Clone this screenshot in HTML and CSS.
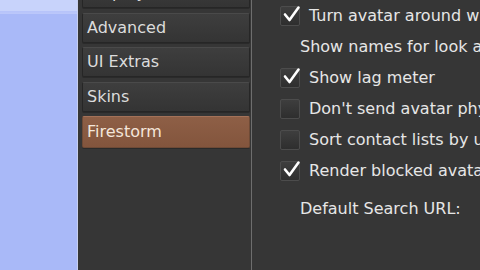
FILE: index.html
```html
<!DOCTYPE html>
<html>
<head>
<meta charset="utf-8">
<link rel="stylesheet" href="styles.css">
</head>
<body>
<div class="screen">
  <div class="desktop">
    <div class="desk-top"></div>
    <div class="desk-band"></div>
  </div>
  <div class="panel">
    <div class="tabs">
      <div class="tab">Display</div>
      <div class="tab">Advanced</div>
      <div class="tab">UI Extras</div>
      <div class="tab">Skins</div>
      <div class="tab selected">Firestorm</div>
    </div>
    <div class="sep"></div>
    <div class="content">
      <div class="row"><span class="cb checked"><svg viewBox="0 0 20 20"><path d="M4 9.5 L8.5 15 L17.5 2.5"/></svg></span><span class="lbl">Turn avatar around when walking backwards</span></div>
      <div class="row plain"><span class="lbl">Show names for look at targets</span></div>
      <div class="row"><span class="cb checked"><svg viewBox="0 0 20 20"><path d="M4 9.5 L8.5 15 L17.5 2.5"/></svg></span><span class="lbl">Show lag meter</span></div>
      <div class="row"><span class="cb"></span><span class="lbl">Don't send avatar physics</span></div>
      <div class="row"><span class="cb"></span><span class="lbl">Sort contact lists by username</span></div>
      <div class="row"><span class="cb checked"><svg viewBox="0 0 20 20"><path d="M4 9.5 L8.5 15 L17.5 2.5"/></svg></span><span class="lbl">Render blocked avatars</span></div>
      <div class="row plain url"><span class="lbl">Default Search URL:</span></div>
    </div>
  </div>
</div>
</body>
</html>
```
FILE: styles.css
```css
html, body {
  margin: 0;
  padding: 0;
  width: 480px;
  height: 270px;
  overflow: hidden;
  background: #353535;
}
.screen {
  display: flex;
  width: 480px;
  height: 270px;
  font-family: "DejaVu Sans", sans-serif;
  font-size: 16px;
  color: #e4e4e4;
}
.desktop {
  width: 77px;
  flex: none;
  background: #a9b9f8;
  border-right: 1px solid #c7cfee;
  display: flex;
  flex-direction: column;
}
.desk-top {
  height: 11px;
  background: #c8d3fb;
}
.desk-band {
  height: 3px;
  background: linear-gradient(#b6c3fa, #bcc8fa);
}
.panel {
  flex: 1;
  display: flex;
  background: #363636;
}
.tabs {
  width: 168px;
  flex: none;
  padding-left: 4px;
  margin-top: -22px;
  display: flex;
  flex-direction: column;
  gap: 4.5px;
}
.tab {
  height: 28px;
  line-height: 28px;
  padding-left: 4px;
  border: 1px solid #262626;
  border-top-color: #4a4a4a;
  border-radius: 2px;
  background: linear-gradient(#3e3e3e, #343434);
  color: #dcdcdc;
  box-shadow: 0 1px 0 #2a2a2a;
}
.tab.selected {
  height: 30px;
  line-height: 30px;
  background: linear-gradient(#8e5f46, #83553d);
  border-color: #6e4a36;
  border-top-color: #a47259;
  color: #f4e6da;
}
.sep {
  width: 1px;
  flex: none;
  margin-left: 1px;
  background: #6e6e6e;
}
.content {
  flex: 1;
  padding-left: 28px;
  display: flex;
  flex-direction: column;
  overflow: hidden;
}
.row {
  height: 31px;
  display: flex;
  align-items: center;
  white-space: nowrap;
}
.row.plain {
  padding-left: 20px;
}
.row.url {
  margin-top: 7px;
}
.cb {
  width: 18px;
  height: 18px;
  flex: none;
  margin-right: 9px;
  border: 1px solid #4c4c4c;
  border-radius: 2px;
  background: linear-gradient(#3e3e3e, #2e2e2e);
  position: relative;
}
.cb svg {
  position: absolute;
  left: 0;
  top: -2px;
  width: 20px;
  height: 20px;
  fill: none;
  stroke: #ffffff;
  stroke-width: 2.6;
  stroke-linecap: round;
  stroke-linejoin: round;
}
.lbl {
  color: #e6e6e6;
}
```
